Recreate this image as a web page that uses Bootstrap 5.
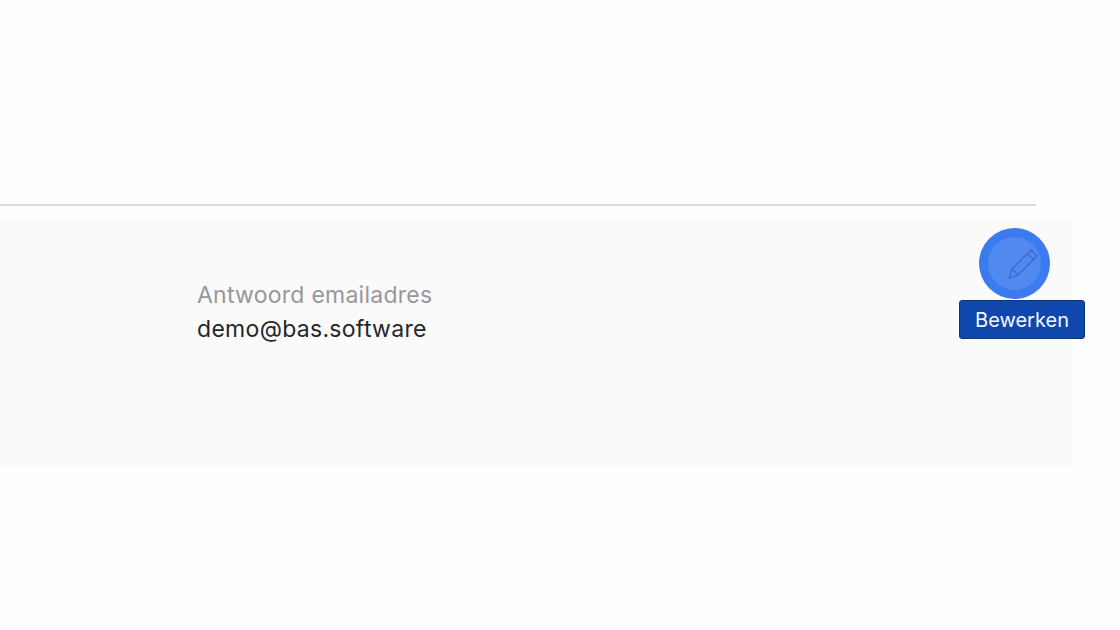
<!DOCTYPE html>
<html lang="nl">
<head>
<meta charset="utf-8">
<title>Antwoord emailadres</title>
<link href="https://cdn.jsdelivr.net/npm/bootstrap@5.3.0/dist/css/bootstrap.min.css" rel="stylesheet">
<style>
html,body{height:100%;}
body{background:#fefefe;font-family:"Inter","Noto Sans",sans-serif;overflow:hidden;}
.page-top{padding-top:204px;}
.rule-line{width:1036px;height:2px;background:#d9d9d9;}
.info-panel{width:1072px;height:248px;margin-top:12px;background:#fafafa;padding:60px 0 0 197px;position:relative;}
.field-label{font-size:23px;line-height:34px;color:#97979b;letter-spacing:.25px;}
.field-value{font-size:23px;line-height:35px;color:#25272b;letter-spacing:.3px;}
.edit-wrap{position:absolute;top:10px;left:959px;width:126px;}
.edit-circle{width:71px;height:71px;background:#3b7bee;margin-left:20px;}
.edit-inner{width:53px;height:53px;background:#5289f1;}
.edit-icon{margin-left:16px;flex:none;}
.edit-tip{height:39px;margin-top:1px;background:#0f47ad;border:1px solid #0a357f;border-radius:3px;color:#f6f8fd;font-size:20px;line-height:1;}
</style>
</head>
<body>
<div class="page-top">
  <div class="rule-line"></div>
  <section class="info-panel">
    <div class="field-label">Antwoord emailadres</div>
    <div class="field-value">demo@bas.software</div>
    <div class="edit-wrap d-flex flex-column">
      <div class="edit-circle rounded-circle d-flex align-items-center justify-content-center">
        <div class="edit-inner rounded-circle d-flex align-items-center justify-content-center">
          <svg class="edit-icon" width="32" height="32" viewBox="0 0 32 32" fill="none" stroke="#3a6dd0" stroke-width="1.5" stroke-linejoin="round" aria-hidden="true">
            <path d="M24 2 L30 8 L11 27 L2 30 L5 21 Z"/>
            <path d="M20.5 5.5 L26.5 11.5"/>
            <path d="M5 21 L11 27"/>
          </svg>
        </div>
      </div>
      <div class="edit-tip w-100 d-flex align-items-center justify-content-center">Bewerken</div>
    </div>
  </section>
</div>
<script src="https://cdn.jsdelivr.net/npm/bootstrap@5.3.0/dist/js/bootstrap.bundle.min.js"></script>
</body>
</html>
